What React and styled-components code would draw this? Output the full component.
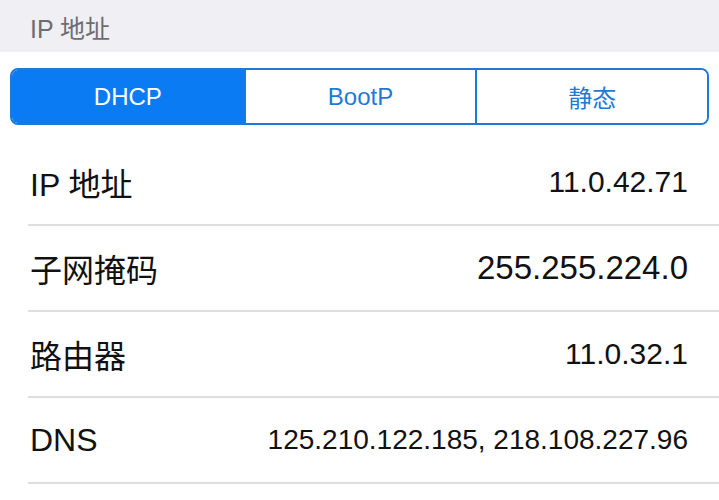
import styled, { createGlobalStyle } from "styled-components";

const Global = createGlobalStyle`
  body {
    margin: 0;
    background: #ffffff;
    font-family: "Liberation Sans", "Noto Sans CJK SC", sans-serif;
  }
`;

const Page = styled.div`
  width: 719px;
  height: 500px;
  overflow: hidden;
  background: #fff;
`;

const SectionHeader = styled.div`
  height: 52px;
  background: #efeff4;
  color: #6d6d72;
  font-size: 25px;
  padding-left: 30px;
  display: flex;
  align-items: center;
  box-sizing: border-box;
  padding-top: 2px;
`;

const SegmentWrap = styled.div`
  padding: 16px 10px 15px;
`;

const Segmented = styled.div`
  display: grid;
  grid-template-columns: repeat(3, 1fr);
  height: 57px;
  border: 2px solid #1f79d6;
  border-radius: 8px;
  overflow: hidden;
  box-sizing: border-box;
`;

const Segment = styled.div`
  display: flex;
  align-items: center;
  justify-content: center;
  font-size: 24px;
  color: ${(p) => (p.$active ? "#ffffff" : "#1f79d6")};
  background: ${(p) => (p.$active ? "#0b7bf4" : "#ffffff")};
  & + & {
    border-left: 2px solid #1f79d6;
  }
`;

const List = styled.div`
  display: flex;
  flex-direction: column;
`;

const Row = styled.div`
  margin-left: 28px;
  height: 86px;
  display: flex;
  align-items: center;
  justify-content: space-between;
  padding: 0 31px 0 2px;
  border-bottom: 2px solid #dedede;
  box-sizing: border-box;
  color: #111;
`;

const Label = styled.span`
  font-size: 32px;
`;

const Value = styled.span`
  font-size: ${(p) => p.$size || 30}px;
`;

const rows = [
  { label: "IP 地址", value: "11.0.42.71" },
  { label: "子网掩码", value: "255.255.224.0", size: 33 },
  { label: "路由器", value: "11.0.32.1" },
  { label: "DNS", value: "125.210.122.185, 218.108.227.96", size: 28 },
];

export default function App() {
  return (
    <Page>
      <Global />
      <SectionHeader>IP 地址</SectionHeader>
      <SegmentWrap>
        <Segmented>
          <Segment $active>DHCP</Segment>
          <Segment>BootP</Segment>
          <Segment>静态</Segment>
        </Segmented>
      </SegmentWrap>
      <List>
        {rows.map((r) => (
          <Row key={r.label}>
            <Label>{r.label}</Label>
            <Value $size={r.size}>{r.value}</Value>
          </Row>
        ))}
      </List>
    </Page>
  );
}
